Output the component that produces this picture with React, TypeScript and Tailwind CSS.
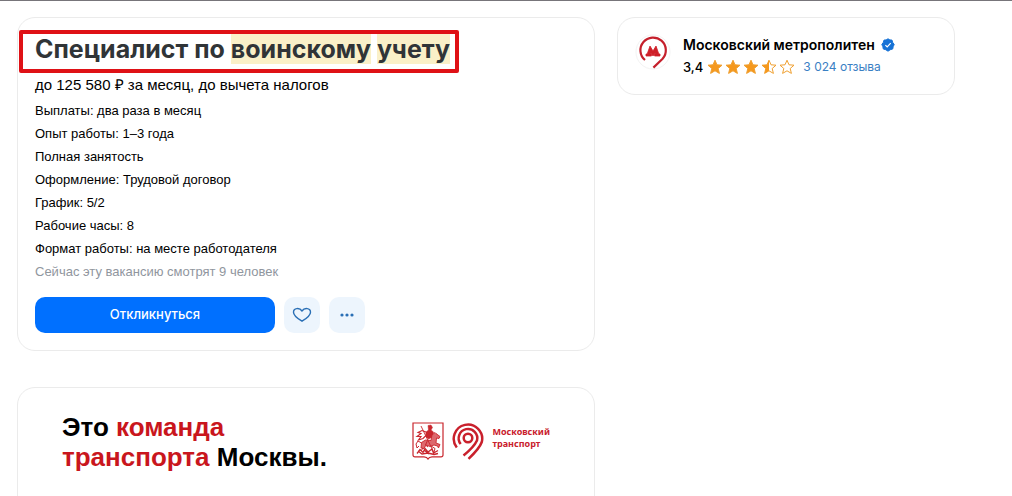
const details = [
    'Выплаты: два раза в месяц',
    'Опыт работы: 1–3 года',
    'Полная занятость',
    'Оформление: Трудовой договор',
    'График: 5/2',
    'Рабочие часы: 8',
    'Формат работы: на месте работодателя'
]

const stars = ['full', 'full', 'full', 'half', 'empty']

const STAR = 'M8 1.2 10 5.8 15 6.2 11.2 9.5 12.4 14.4 8 11.8 3.6 14.4 4.8 9.5 1 6.2 6 5.8Z'

function Star({ kind }: { kind: string }) {
    return (
        <svg viewBox="0 0 16 16" className="h-4 w-4" aria-hidden="true">
            <path d={STAR} fill={kind === 'full' ? '#f5981d' : '#fff'} stroke="#f0a030" strokeWidth="1" strokeLinejoin="round" />
            {kind === 'half' && <path d="M8 1.2V11.8L3.6 14.4 4.8 9.5 1 6.2 6 5.8Z" fill="#f5981d" />}
        </svg>
    )
}

function MetroLogo() {
    return (
        <svg viewBox="0 0 36 36" className="h-9 w-9 shrink-0" aria-hidden="true">
            <circle cx="18" cy="18" r="17" fill="#fff" stroke="#f3f3f3" />
            <path d="M10 26A12.7 12.7 0 1 1 27.6 24.7L18.4 33.6" fill="none" stroke="#c5202c" strokeWidth="2.2" />
            <path d="M11 20H12.2L15 12 18 17 21 12 23.8 20H25V22H19.6V20H20.3L20 19 18 22 16 19 15.7 20H16.400V22H11Z" fill="#cf2029" stroke="#cf2029" strokeWidth=".8" />
        </svg>
    )
}

function VerifiedIcon() {
    return (
        <svg viewBox="0 0 14 14" className="h-[14px] w-[14px]" aria-hidden="true">
            <path d="M7 .8 8.9 1.9 11 2.1 11.7 4.4 13.2 6.5 12.2 8.6 11.7 11 9.3 11.7 7 13.2 4.7 11.7 2.3 11 1.8 8.6.8 6.5 2.3 4.4 3 2.1 5.1 1.9Z" fill="#1672d6" stroke="#1672d6" strokeLinejoin="round" />
            <path d="m4.4 7.1 1.8 1.8 3.5-3.7" fill="none" stroke="#fff" strokeWidth="1.2" />
        </svg>
    )
}

function CoatOfArms() {
    return (
        <svg viewBox="0 0 32 38" className="h-[38px] w-8" fill="none" stroke="#c9262d" aria-hidden="true">
            <path d="M1 1h30v32q0 1.8-2 1.8H20Q17 34.8 16 37q-1-2.2-4-2.2H3Q1 34.8 1 33Z" strokeWidth="1.2" />
            {/* rider and cloak */}
            <path d="M16 3.500 19 3 20.500 5.500 19 8 21.500 10 20.500 15 16.500 17 13.500 14.500 14 10 16.500 8Z" fill="#c9262d" strokeWidth=".5" />
            <path d="M14 10 10 8.500 6 10.500 9 11.500 5 14.500 9 14.500 6.500 18 11 16.500 13.500 14" strokeWidth="1.1" />
            {/* horse */}
            <path d="M20 13 23 10.500 24 11.500 28 14.500 27 16.500 24.500 16 24 21 28 22.500 26.500 26 25.500 24 22 23 18 24.500 14 23 12 26.500 9 26 9.500 20.500 13.500 18 19 18.500Z" fill="#dd686d" strokeWidth=".9" />
            <path d="M9.500 21 6 19 4 22 5 26 7 24M19 24l4 2.500-1 3.500M15.500 18.500l-2 4.500 2.500 2M11 26l-2 3" strokeWidth="1" />
            {/* spear and dragon */}
            <path d="M9 4 22 31" strokeWidth=".9" />
            <path d="M5 31.500 8 27.500 11 30.500 13 26.500 16 30 20 27 21.500 31 26 28.500M6 29l4 3 6-1 6 1.500 4-1M12 28l5 4" strokeWidth="1.3" />
        </svg>
    )
}

function TransportLogo() {
    return (
        <svg viewBox="0 0 32 38" className="h-[38px] w-8" fill="none" stroke="#c9202c" strokeWidth="2.5" aria-hidden="true">
            <path d="M4.800 25.500A14.200 14.200 0 1 1 29.800 20Q27.500 26.500 16.500 36.800" />
            <path d="M8.700 22A9.300 9.300 0 1 1 25 18.500Q22 25 11.500 33.500" />
            <circle cx="16" cy="16" r="4.300" />
        </svg>
    )
}

export default function App() {
    return (
        <main className="h-screen overflow-hidden border-t border-[#77757a] bg-white pr-[57px] pl-[17px] font-['Inter','Liberation_Sans',sans-serif] text-black">
            <div className="flex items-start gap-[22px] pt-4">
                <div className="flex min-w-0 flex-1 flex-col gap-9">
                    <section className="rounded-[18px] border border-[#ebebeb] px-[17px] pt-4 pb-[17px]">
                        <div className="relative">
                            <h1 className="text-[25px] leading-[30px] font-bold whitespace-nowrap text-[#303437]">
                                Специалист по <mark className="bg-[#faf0c8] text-inherit">воинскому</mark>{' '}
                                <mark className="bg-[#faf0c8] text-inherit">учету</mark>
                            </h1>
                            <span className="absolute -top-1 -left-4 h-[43px] w-[440px] rounded-xs border-4 border-[#df1116]" />
                        </div>
                        <div className="mt-[11px] font-['Liberation_Sans',Arial,sans-serif]">
                            <p className="text-[15px] leading-5">до 125 580 ₽ за месяц, до вычета налогов</p>
                            <ul className="mt-1 text-[13px] leading-[23px]">
                                {details.map((line) => (
                                    <li key={line}>{line}</li>
                                ))}
                            </ul>
                            <p className="text-[13px] leading-[23px] text-[#90969e]">Сейчас эту вакансию смотрят 9 человек</p>
                        </div>

                        <div className="mt-[14px] flex gap-[9px]">
                            <button className="h-9 w-60 rounded-[10px] bg-[#0070ff] text-[13px] font-medium text-white">
                                Откликнуться
                            </button>
                            <button aria-label="В избранное" className="flex h-9 w-9 items-center justify-center rounded-[10px] bg-[#edf5fd]">
                                <svg viewBox="0 0 20 16" className="h-4 w-5" fill="none" stroke="#2a6fb5" strokeWidth="1.4" strokeLinejoin="round">
                                    <path d="M10 14.2C5.5 11.5 1.5 8.5 1.5 5.2 1.5 1 7.5.2 10 4 12.5.2 18.5 1 18.5 5.2 18.5 8.5 14.5 11.5 10 14.2Z" />
                                </svg>
                            </button>
                            <button aria-label="Ещё" className="flex h-9 w-9 items-center justify-center rounded-[10px] bg-[#edf5fd]">
                                <svg viewBox="0 0 16 4" className="h-1 w-4" fill="#2a6fb5">
                                    <circle cx="3" cy="2" r="1.6" />
                                    <circle cx="8" cy="2" r="1.6" />
                                    <circle cx="13" cy="2" r="1.6" />
                                </svg>
                            </button>
                        </div>
                    </section>

                    <section className="flex min-h-48 items-start justify-between rounded-[18px] border border-[#ebebeb] pt-6 pr-11 pl-11">
                        <h2 className="font-['Liberation_Sans',Arial,sans-serif] text-[26px] leading-[30px] font-bold whitespace-nowrap">
                            Это <span className="text-[#c9161d]">команда</span>
                            <br />
                            <span className="text-[#c9161d]">транспорта</span> Москвы.
                        </h2>
                        <div className="mt-[10px] flex gap-2">
                            <CoatOfArms />
                            <TransportLogo />
                            <p className="mt-1 font-['Noto_Sans',sans-serif] text-[9px] leading-3 font-bold text-[#c9202c]">
                                Московский
                                <br />
                                транспорт
                            </p>
                        </div>
                    </section>
                </div>

                <aside className="flex h-[78px] w-[338px] gap-3 rounded-[18px] border border-[#ebebeb] pt-4 pl-[17px]">
                    <MetroLogo />
                    <div>
                        <div className="flex items-center gap-[6px] text-sm leading-[22px] font-semibold">
                            Московский метрополитен
                            <VerifiedIcon />
                        </div>
                        <div className="flex items-center text-xs leading-[22px]">
                            <span className="text-[13px] font-medium">3,4</span>
                            <span className="ml-1 flex gap-[2px]">
                                {stars.map((kind, i) => (
                                    <Star key={i} kind={kind} />
                                ))}
                            </span>
                            <a href="#" className="ml-2 text-[#3a80c4]">3 024 отзыва</a>
                        </div>
                    </div>
                </aside>
            </div>
        </main>
    )
}
